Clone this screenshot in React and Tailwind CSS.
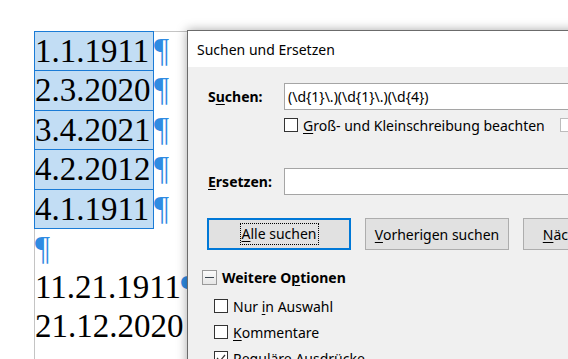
const U = ({ children }) => <span className="underline underline-offset-2 decoration-1">{children}</span>;

function Box({ checked }) {
  return (
    <div className="w-[14px] h-[14px] shrink-0 border border-[#333333] bg-white flex items-center justify-center">
      {checked && (
        <svg width="10" height="10" viewBox="0 0 10 10">
          <path d="M1 5 L4 8 L9 2" fill="none" stroke="#333" strokeWidth="1.2" />
        </svg>
      )}
    </div>
  );
}

export default function App() {
  const sel = [
    ["1.1.1911", "h-[39px]"],
    ["2.3.2020", "h-[40px]"],
    ["3.4.2021", "h-[39px]"],
    ["4.2.2012", "h-[40px]"],
    ["4.1.1911", "h-[40px]"],
  ];
  return (
    <div className="relative w-[568px] h-[359px] overflow-hidden bg-white">
      {/* document page */}
      <div className="ml-[34px] mt-[31px] h-[400px] border-l border-t border-[#c4c4c4] font-['Liberation_Serif'] text-[33px] text-black">
        {sel.map(([t, h], i) => (
          <div key={i} className={`flex ${h} ${i === 0 ? "-mt-px" : ""}`}>
            <div
              className={`-ml-px w-[120px] h-full border-l border-r border-t ${i === 4 ? "border-b" : ""} border-[#1a7bd6] bg-[#c2ddf4] leading-[39px]`}
            >
              {t}
            </div>
            <span className="leading-[39px] text-[#2f8be2]">¶</span>
          </div>
        ))}
        <div className="h-[39px] leading-[39px] text-[#2f8be2]">¶</div>
        <div className="h-[39px] leading-[39px] whitespace-nowrap">
          11.21.1911<span className="text-[#2f8be2]">¶</span>
        </div>
        <div className="h-[39px] leading-[39px]">21.12.2020</div>
      </div>

      {/* dialog */}
      <div className="absolute left-[187px] top-[30px] w-[460px] h-[360px] border border-[#6b6b6b] bg-[#f0f0f0] shadow-[0_0_10px_rgba(0,0,0,0.35)] font-['Noto_Sans'] text-[14px] text-black">
        <div className="h-[36px] bg-white flex items-center pl-[9px] text-[14px]">Suchen und Ersetzen</div>

        <div className="flex items-center mt-[16px] pl-[20px]">
          <div className="w-[76px] font-bold">
            S<U>u</U>chen:
          </div>
          <div className="flex-1 h-[27px] bg-white border border-[#a5a5a5] flex items-center pl-[3px]">
            {"(\\d{1}\\.)(\\d{1}\\.)(\\d{4})"}
          </div>
        </div>

        <div className="flex items-center mt-[8px] ml-[96px] h-[14px] whitespace-nowrap">
          <Box />
          <span className="ml-[5px]">
            <U>G</U>roß- und Kleinschreibung beachten
          </span>
          <div className="ml-[15px] w-[14px] h-[14px] shrink-0 border border-[#bcbcbc] bg-white" />
        </div>

        <div className="flex items-center mt-[36px] pl-[20px]">
          <div className="w-[76px] font-bold">
            <U>E</U>rsetzen:
          </div>
          <div className="flex-1 h-[27px] bg-white border border-[#a5a5a5]" />
        </div>

        <div className="flex mt-[23px] ml-[19px] gap-[14px] whitespace-nowrap">
          <div className="w-[144px] shrink-0 h-[32px] border-2 border-[#0078d7] bg-[#e1e1e1] flex items-center justify-center">
            <span className="border border-dotted border-black px-px leading-[20px]">
              <U>A</U>lle suchen
            </span>
          </div>
          <div className="w-[144px] shrink-0 h-[32px] border border-[#adadad] bg-[#e1e1e1] flex items-center justify-center">
            <span>
              <U>V</U>orherigen suchen
            </span>
          </div>
          <div className="w-[144px] shrink-0 h-[32px] border border-[#adadad] bg-[#e1e1e1] flex items-center justify-center">
            <span>
              <U>N</U>ächste suchen
            </span>
          </div>
        </div>

        <div className="flex items-center mt-[20px] ml-[14px] h-[15px]">
          <div className="w-[15px] h-[15px] border border-[#9a9a9a] bg-gradient-to-b from-[#fbfbfb] to-[#e6e6e6] flex items-center justify-center">
            <div className="w-[9px] h-px bg-[#3c4650]" />
          </div>
          <span className="ml-[5px] font-bold">
            Weitere O<U>p</U>tionen
          </span>
        </div>

        <div className="flex items-center mt-[14px] ml-[26px] h-[14px]">
          <Box />
          <span className="ml-[5px]">
            Nur <U>i</U>n Auswahl
          </span>
        </div>
        <div className="flex items-center mt-[12px] ml-[26px] h-[14px]">
          <Box />
          <span className="ml-[5px]">
            <U>K</U>ommentare
          </span>
        </div>
        <div className="flex items-center mt-[12px] ml-[26px] h-[14px]">
          <Box checked />
          <span className="ml-[5px]">
            Re<U>g</U>uläre Ausdrücke
          </span>
        </div>
      </div>
    </div>
  );
}
